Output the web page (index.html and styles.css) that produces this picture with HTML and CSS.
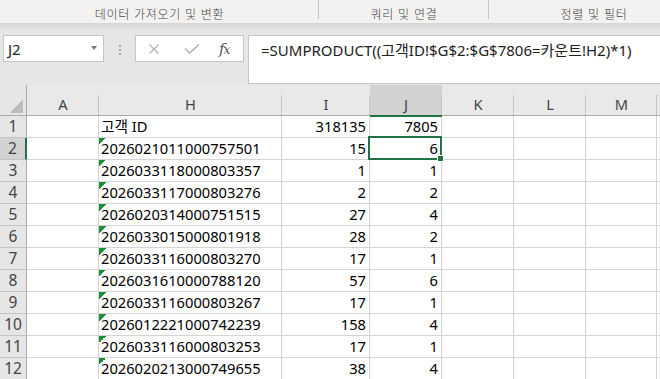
FILE: index.html
```html
<!DOCTYPE html>
<html lang="ko">
<head>
    <meta charset="UTF-8">
    <title>Excel</title>
    <link rel="stylesheet" href="styles.css">
</head>
<body>
    <div class="ribbon">
        <div class="group group-get"><span>데이터 가져오기 및 변환</span></div>
        <div class="group group-query"><span>쿼리 및 연결</span></div>
        <div class="group group-sort"><span>정렬 및 필터</span></div>
    </div>

    <div class="fbar">
        <div class="namebox">
            <span>J2</span>
            <i class="arrow"></i>
        </div>
        <div class="grip"><i></i><i></i><i></i></div>
        <div class="fbuttons">
            <svg class="btn" width="12" height="10" viewBox="0 0 12 10">
                <path d="M1.5 0.5 L10.5 9.5 M10.5 0.5 L1.5 9.5" stroke="#b3b3b3" stroke-width="1.3" fill="none"/>
            </svg>
            <svg class="btn" width="16" height="10" viewBox="0 0 16 10">
                <path d="M1 4.5 L5.5 9 L15 0.5" stroke="#b3b3b3" stroke-width="1.6" fill="none"/>
            </svg>
            <span class="fx"><i>f</i><i class="x">x</i></span>
        </div>
        <div class="formula">=SUMPRODUCT((고객ID!$G$2:$G$7806=카운트!H2)*1)</div>
    </div>

    <div class="sheet" id="sheet"></div>

    <script>
        const columns = ['A', 'H', 'I', 'J', 'K', 'L', 'M', ''];
        const rows = [
            ['고객 ID', '318135', '7805'],
            ['2026021011000757501', '15', '6'],
            ['2026033118000803357', '1', '1'],
            ['2026033117000803276', '2', '2'],
            ['2026020314000751515', '27', '4'],
            ['2026033015000801918', '28', '2'],
            ['2026033116000803270', '17', '1'],
            ['2026031610000788120', '57', '6'],
            ['2026033116000803267', '17', '1'],
            ['2026012221000742239', '158', '4'],
            ['2026033116000803253', '17', '1'],
            ['2026020213000749655', '38', '4']
        ];

        const sheet = document.getElementById('sheet');

        function cell(cls, text) {
            const div = document.createElement('div');
            div.className = cls;
            if (text) div.textContent = text;
            sheet.appendChild(div);
            return div;
        }

        cell('corner');
        columns.forEach(function(c) {
            cell('colhdr' + (c === 'J' ? ' active' : ''), c);
        });

        rows.forEach(function(r, i) {
            const n = i + 1;
            cell('rowhdr' + (n === 2 ? ' active' : ''), String(n));
            cell('cell');
            cell('cell text' + (n > 1 ? ' flag' : ''), r[0]);
            cell('cell num', r[1]);
            cell('cell num' + (n === 2 ? ' selected' : ''), r[2]);
            cell('cell');
            cell('cell');
            cell('cell');
            cell('cell');
        });
    </script>
</body>
</html>
```

FILE: styles.css
```css
body {
    margin: 0;
    width: 660px;
    height: 379px;
    overflow: hidden;
    background-color: #e6e6e6;
    font-family: "Noto Sans", "Noto Sans CJK KR", sans-serif;
    color: #000;
}

/* ribbon group labels */
.ribbon {
    display: flex;
    height: 23px;
    background-color: #f3f2f1;
    overflow: hidden;
    white-space: nowrap;
}
.group {
    flex: none;
    display: flex;
    justify-content: center;
    padding-top: 6px;
    box-sizing: border-box;
    font-family: "Noto Sans CJK KR", sans-serif;
    font-size: 12px;
    font-weight: 300;
    letter-spacing: 0.7px;
    line-height: 16px;
    color: #444;
    background: linear-gradient(#c8c6c4, #c8c6c4) no-repeat right top / 1px 19px;
}
.group-get { width: 319px; }
.group-query { width: 170px; }
.group-sort { width: 210px; background: none; }

/* formula bar */
.fbar {
    display: flex;
    align-items: flex-start;
    height: 62px;
    padding: 12px 0 0 3px;
    box-sizing: border-box;
    background: linear-gradient(#d5d5d5 0, #e6e6e6 8px);
}
.namebox {
    width: 101px;
    height: 27px;
    box-sizing: border-box;
    border: 1px solid #c6c6c6;
    background-color: #fff;
    display: flex;
    align-items: center;
    justify-content: space-between;
    padding: 1px 6px 0 4px;
    font-size: 15px;
    color: #222;
}
.arrow {
    width: 0;
    height: 0;
    border-left: 3.5px solid transparent;
    border-right: 3.5px solid transparent;
    border-top: 4px solid #777;
    margin-top: -2px;
}
.grip {
    width: 31px;
    display: flex;
    flex-direction: column;
    align-items: center;
    gap: 2px;
    padding-top: 10px;
}
.grip i {
    width: 2px;
    height: 2px;
    background-color: #a6a6a6;
}
.fbuttons {
    width: 109px;
    height: 27px;
    box-sizing: border-box;
    border: 1px solid #c6c6c6;
    background-color: #fff;
    display: flex;
    align-items: center;
    padding: 1px 0 0 12px;
}
.btn:first-child { margin-right: 24px; }
.btn:nth-child(2) { margin-right: 19px; }
.fx {
    font-family: "DejaVu Serif", serif;
    font-size: 15px;
    color: #555;
    letter-spacing: -1px;
}
.fx .x {
    font-size: 12px;
}
.formula {
    flex: 1;
    margin-left: 4px;
    height: 49px;
    box-sizing: border-box;
    border: 1px solid #c6c6c6;
    border-right: none;
    background-color: #fff;
    padding: 4px 0 0 12px;
    font-size: 15px;
    line-height: 20px;
    color: #222;
    white-space: nowrap;
}

/* grid */
.sheet {
    display: grid;
    grid-template-columns: 27px 72px 183px 88px 72px 72px 72px 71px 1fr;
    grid-template-rows: 31px;
    grid-auto-rows: 22px;
    font-size: 14.7px;
}
.corner {
    border-right: 1px solid #ababab;
    border-bottom: 1px solid #ababab;
    background: linear-gradient(to bottom right, transparent 50%, #bcbcbc 50%) no-repeat right 3px bottom 2px / 14px 14px;
}
.colhdr {
    border-bottom: 1px solid #ababab;
    background: linear-gradient(#c6c6c6, #c6c6c6) no-repeat right bottom / 1px 20px;
    background-color: #e9e9e9;
    text-align: center;
    padding-top: 9px;
    line-height: 20px;
    color: #444;
}
.colhdr.active {
    background-color: #d2d2d2;
    border-bottom: 2px solid #217346;
    margin-bottom: -1px;
    position: relative;
}
.rowhdr {
    border-right: 1px solid #ababab;
    border-bottom: 1px solid #c4c4c4;
    background-color: #e6e6e6;
    text-align: center;
    font-size: 15.5px;
    line-height: 21px;
    color: #444;
}
.rowhdr.active {
    background-color: #d2d2d2;
    border-right: 2px solid #217346;
}
.cell {
    border-right: 1px solid #d4d4d4;
    border-bottom: 1px solid #d4d4d4;
    background-color: #fff;
    line-height: 20px;
    padding: 0 3px;
    white-space: nowrap;
    overflow: hidden;
}
.text { padding-left: 2px; }
.num { text-align: right; }
.flag {
    background: linear-gradient(to bottom right, #1d8f3a 50%, transparent 50%) no-repeat 0 0 / 7px 7px;
    background-color: #fff;
}
.selected {
    position: relative;
    overflow: visible;
}
.selected::after {
    content: "";
    position: absolute;
    top: -2px;
    left: -2px;
    right: -1px;
    bottom: -1px;
    border: 2px solid #217346;
}
.selected::before {
    content: "";
    position: absolute;
    right: -3px;
    bottom: -3px;
    width: 5px;
    height: 5px;
    background-color: #217346;
    border: 1px solid #fff;
    z-index: 1;
}
```
